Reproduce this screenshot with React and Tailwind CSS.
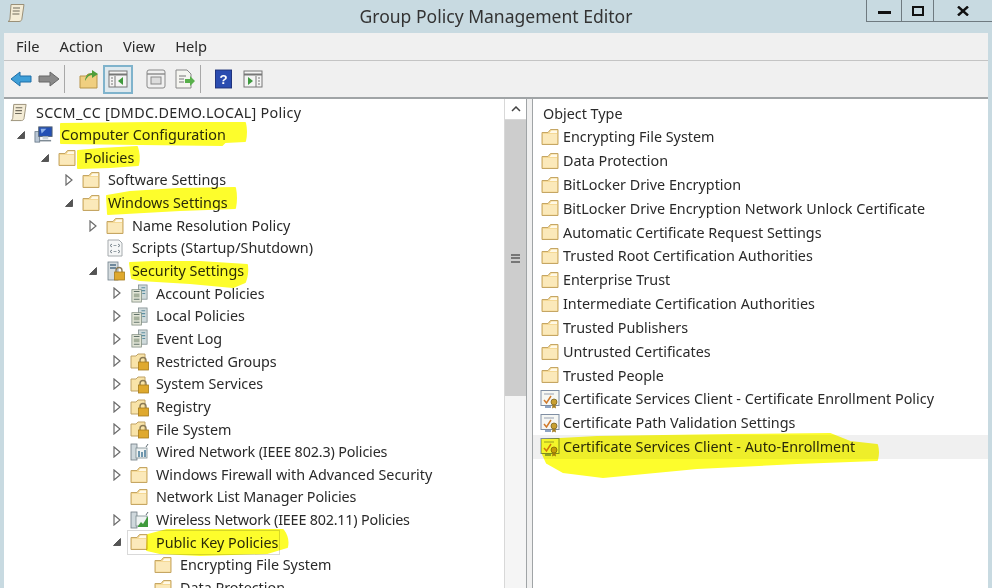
import React from 'react';

const uiFont = 'font-["Noto_Sans","Open_Sans",sans-serif]';

function Folder({ className = '' }) {
  return (
    <svg viewBox="0 0 18 18" className={`w-[18px] h-[18px] shrink-0 ${className}`}>
      <path d="M1 4.5 L1 16.5 L17 16.5 L17 1.5 L9.5 1.5 L7 4.5 Z" fill="#f5d995" stroke="#c5a664" strokeWidth="1" />
      <path d="M2 6 L2 15.5 L16 15.5 L16 6 Z" fill="#fbe9ba" />
      <path d="M8.5 5 L10.5 2.5 L16 2.5 L16 5 Z" fill="#fff9e8" />
    </svg>
  );
}

function LockFolder() {
  return (
    <svg viewBox="0 0 20 20" className="w-5 h-5 shrink-0">
      <path d="M1 5 L1 17 L15 17 L15 3 L8 3 L6 5 Z" fill="#f8e3a8" stroke="#bfa265" strokeWidth="1" />
      <path d="M10 11 V9.5 a3 3 0 0 1 6 0 V11" fill="none" stroke="#8a7a55" strokeWidth="1.4" />
      <rect x="8.5" y="11" width="10" height="8" fill="#dfa92e" stroke="#a67c1c" strokeWidth="0.8" />
    </svg>
  );
}

function Policy() {
  return (
    <svg viewBox="0 0 20 20" className="w-[19px] h-[19px] shrink-0">
      <rect x="9" y="1" width="9" height="15" fill="#cfdadb" stroke="#7d8a8c" strokeWidth="0.8" />
      <rect x="2" y="6" width="10" height="13" fill="#e3e6d8" stroke="#7d8a7c" strokeWidth="0.8" />
      <rect x="4" y="10" width="6" height="4" fill="#a5b09c" />
      <path d="M4 8 H10 M4 16 H10" stroke="#62736a" strokeWidth="1.1" />
      <path d="M12 4 H16 M12 7 H16 M13 10 H16" stroke="#5d8fa0" strokeWidth="1.2" />
    </svg>
  );
}

function Scroll({ className = 'w-[19px] h-[19px]' }) {
  return (
    <svg viewBox="0 0 20 20" className={`shrink-0 ${className}`}>
      <path d="M5 1.5 H18 L16 15 C16 17 15 18.5 13 18.5 H2 C3.5 18 4 16.5 4 15 Z" fill="#f4ecd6" stroke="#9a9078" strokeWidth="1" />
      <path d="M7 5 H14 M6.7 8 H13.7 M6.4 11 H13.4" stroke="#6f6a5c" strokeWidth="1.2" />
    </svg>
  );
}

function Computer() {
  return (
    <svg viewBox="0 0 20 20" className="w-[19px] h-[19px] shrink-0">
      <rect x="1" y="7" width="5" height="11" fill="#b9c6d4" stroke="#5f7080" strokeWidth="0.8" />
      <rect x="5" y="2" width="14" height="10" fill="#2450b4" stroke="#52606e" strokeWidth="1" />
      <path d="M7 4 L13 4 L8 9 Z" fill="#8fb2ea" />
      <path d="M9 12 H15 V15 H9 Z" fill="#c9d2d8" />
      <path d="M6 16.5 H18" stroke="#7e8a94" strokeWidth="1.6" />
    </svg>
  );
}

function ScriptDoc() {
  return (
    <svg viewBox="0 0 18 18" className="w-[18px] h-[18px] shrink-0">
      <path d="M2 1 H13 L16 4 V17 H2 Z" fill="#f6f7f7" stroke="#a5aaad" strokeWidth="1" />
      <path d="M6 5 L4 6.5 L6 8 M12 5 L14 6.5 L12 8 M6 11 L4 12.5 L6 14 M12 11 L14 12.5 L12 14" fill="none" stroke="#6b7780" strokeWidth="0.9" />
      <path d="M7.5 6.5 H10.5 M7.5 12.5 H10.5" stroke="#8d979e" strokeWidth="0.9" />
    </svg>
  );
}

function SecurityIcon() {
  return (
    <svg viewBox="0 0 20 20" className="w-5 h-5 shrink-0">
      <rect x="2" y="1" width="10" height="18" fill="#d5dcdf" stroke="#71808a" strokeWidth="0.8" />
      <path d="M4 4 H10 M4 7 H10" stroke="#4d6d86" strokeWidth="1.3" />
      <path d="M10 11 V9.5 a3 3 0 0 1 6 0 V11" fill="none" stroke="#8a7a55" strokeWidth="1.4" />
      <rect x="8.5" y="11" width="10" height="8" fill="#dfa92e" stroke="#a67c1c" strokeWidth="0.8" />
    </svg>
  );
}

function NetworkIcon({ wireless }) {
  return (
    <svg viewBox="0 0 20 20" className="w-5 h-5 shrink-0">
      <rect x="1" y="2" width="6" height="16" fill="#cfd8dc" stroke="#6e7b82" strokeWidth="0.8" />
      <rect x="6" y="6" width="11" height="10" fill="#eef2f2" stroke="#7b8a90" strokeWidth="0.8" />
      {wireless ? (
        <path d="M8 16 L11 12 L13 14 L18 6 V17 H8 Z" fill="#3f9a3c" />
      ) : (
        <path d="M9 15 V9 M12 15 V10 M15 15 V8" stroke="#4f7f9c" strokeWidth="1.6" />
      )}
      <path d="M18 2 L16 5" stroke="#5f6b72" strokeWidth="1" />
    </svg>
  );
}

function CertIcon() {
  return (
    <svg viewBox="0 0 20 20" className="w-[20px] h-[20px] shrink-0">
      <rect x="1" y="1.5" width="18" height="15" fill="#f6f7f4" stroke="#7f8ea3" strokeWidth="1" />
      <path d="M4 5 H14" stroke="#a8b0bd" strokeWidth="1.2" />
      <path d="M4 11 L6.5 14 L11 7" fill="none" stroke="#d07a2c" strokeWidth="1.5" />
      <circle cx="14" cy="13" r="3" fill="#c9a032" stroke="#6e5a1a" strokeWidth="0.7" />
      <path d="M5 17 V19 H11 V17 Z" fill="#8ea4c4" />
      <path d="M12.5 16 L12 19.5 L14 18.5 L16 19.5 L15.5 16 Z" fill="#a57f22" />
    </svg>
  );
}

function Arrow({ open }) {
  if (open) {
    return (
      <svg viewBox="0 0 10 10" className="w-[10px] h-[10px]">
        <path d="M8.5 1.5 V8.5 H1.5 Z" fill="#555" stroke="#444" strokeWidth="0.8" />
      </svg>
    );
  }
  return (
    <svg viewBox="0 0 10 12" className="w-[10px] h-3">
      <path d="M2 1 L8 6 L2 11 Z" fill="#fff" stroke="#6b6b6b" strokeWidth="1.2" />
    </svg>
  );
}

const icons = {
  folder: <Folder />,
  lock: <LockFolder />,
  policy: <Policy />,
  scroll: <Scroll />,
  computer: <Computer />,
  script: <ScriptDoc />,
  security: <SecurityIcon />,
  wired: <NetworkIcon />,
  wireless: <NetworkIcon wireless />,
};

const indent = ['pl-[5px]', 'pl-[12px]', 'pl-[36px]', 'pl-[60px]', 'pl-[84px]', 'pl-[108px]', 'pl-[132px]'];

const tree = [
  { level: 0, icon: 'scroll', text: 'SCCM_CC [DMDC.DEMO.LOCAL] Policy', track: 'tracking-[0.3px]' },
  { level: 1, icon: 'computer', text: 'Computer Configuration', arrow: 'open' },
  { level: 2, icon: 'folder', text: 'Policies', arrow: 'open' },
  { level: 3, icon: 'folder', text: 'Software Settings', arrow: 'closed' },
  { level: 3, icon: 'folder', text: 'Windows Settings', arrow: 'open' },
  { level: 4, icon: 'folder', text: 'Name Resolution Policy', arrow: 'closed' },
  { level: 4, icon: 'script', text: 'Scripts (Startup/Shutdown)' },
  { level: 4, icon: 'security', text: 'Security Settings', arrow: 'open' },
  { level: 5, icon: 'policy', text: 'Account Policies', arrow: 'closed' },
  { level: 5, icon: 'policy', text: 'Local Policies', arrow: 'closed' },
  { level: 5, icon: 'policy', text: 'Event Log', arrow: 'closed' },
  { level: 5, icon: 'lock', text: 'Restricted Groups', arrow: 'closed' },
  { level: 5, icon: 'lock', text: 'System Services', arrow: 'closed' },
  { level: 5, icon: 'lock', text: 'Registry', arrow: 'closed' },
  { level: 5, icon: 'lock', text: 'File System', arrow: 'closed' },
  { level: 5, icon: 'wired', text: 'Wired Network (IEEE 802.3) Policies', arrow: 'closed', track: 'tracking-[-0.15px]' },
  { level: 5, icon: 'folder', text: 'Windows Firewall with Advanced Security', arrow: 'closed' },
  { level: 5, icon: 'folder', text: 'Network List Manager Policies', track: 'tracking-[-0.1px]' },
  { level: 5, icon: 'wireless', text: 'Wireless Network (IEEE 802.11) Policies', arrow: 'closed', track: 'tracking-[-0.2px]' },
  { level: 5, icon: 'folder', text: 'Public Key Policies', arrow: 'open', selected: true },
  { level: 6, icon: 'folder', text: 'Encrypting File System' },
  { level: 6, icon: 'folder', text: 'Data Protection' },
];

const objects = [
  'Encrypting File System',
  'Data Protection',
  'BitLocker Drive Encryption',
  'BitLocker Drive Encryption Network Unlock Certificate',
  'Automatic Certificate Request Settings',
  'Trusted Root Certification Authorities',
  'Enterprise Trust',
  'Intermediate Certification Authorities',
  'Trusted Publishers',
  'Untrusted Certificates',
  'Trusted People',
];

// highlighter strokes traced from the picture
const marks = [
  'M61 124 L150 123 L245 123 Q247 132 245 141 L225 142 L222 145 L61 143 Z',
  'M78 151 L100 149 L137 147 Q140 156 138 165 L110 167 L78 168 Z',
  'M107 196 L130 192 L178 189 L235 188 Q237 198 235 208 L180 210 L108 214 Z',
  'M130 263 L153 262 L200 262 L247 265 Q248 274 245 282 L233 287 L190 283 L140 280 L132 278 Z',
  'M148 535 L167 530 L283 530 Q289 538 287 547 L267 553 L200 555 L160 553 L147 550 Z',
  'M542 440 L597 437 L730 435 L830 434 L850 442 L877 445 Q879 452 877 460 L797 463 L697 468 L603 477 L563 472 L547 463 L542 452 Z',
];

function TreeRow({ row }) {
  const iconBox = row.level > 1 ? 'w-[26px]' : 'w-[27px]';
  return (
    <div className={`flex items-center h-[22.65px] shrink-0 whitespace-nowrap ${indent[row.level]}`}>
      {row.level > 0 && (
        <span className="w-[18px] flex justify-start items-center shrink-0">
          {row.arrow && <Arrow open={row.arrow === 'open'} />}
        </span>
      )}
      <span className={`${iconBox} flex items-center shrink-0`}>{icons[row.icon]}</span>
      <span className={`relative ${row.track || ''}`}>
        {row.selected && <span className="absolute left-[-29px] right-[-2px] top-[-2px] bottom-[-2px] border border-[#d9d9d9]" />}
        <span className="relative">{row.text}</span>
      </span>
    </div>
  );
}

function ToolbarIcons() {
  return (
    <div className="flex items-center h-[36px] pl-[6px] shrink-0">
      <svg viewBox="0 0 22 18" className="w-[22px] h-[18px]">
        <path d="M1 9 L10 2 V6 H21 V12 H10 V16 Z" fill="#3f9fd8" stroke="#1f6fa8" strokeWidth="1" />
      </svg>
      <svg viewBox="0 0 22 18" className="w-[22px] h-[18px] ml-[6px]">
        <path d="M21 9 L12 2 V6 H1 V12 H12 V16 Z" fill="#8a8a8a" stroke="#666" strokeWidth="1" />
      </svg>
      <span className="w-px h-[28px] bg-[#a8a8a8] ml-[4px]" />
      <svg viewBox="0 0 20 20" className="w-5 h-5 ml-[14px]">
        <path d="M1 7 V19 H18 V5 H9 L7 7 Z" fill="#f0cf80" stroke="#b89548" />
        <path d="M6 12 C6 7 10 4 13 4 V1 L19 5 L13 9 V6 C10 6 8 8 6 12 Z" fill="#4f9e3a" />
      </svg>
      <span className="w-[30px] h-[29px] ml-[4px] border-2 border-[#7fb3cc] bg-[#dfe9ee] flex items-center justify-center">
        <svg viewBox="0 0 20 18" className="w-[20px] h-[18px]">
          <rect x="1" y="1" width="18" height="16" fill="#f4f4f4" stroke="#777" />
          <path d="M1 4.5 H19" stroke="#777" strokeWidth="2" />
          <path d="M7 6 V17" stroke="#777" />
          <path d="M3 8 H5 M3 11 H5 M3 14 H5" stroke="#777" />
          <path d="M15 7 V15 L10 11 Z" fill="#3e9a3e" />
        </svg>
      </span>
      <svg viewBox="0 0 20 20" className="w-5 h-5 ml-[13px]">
        <rect x="1" y="1" width="18" height="18" rx="2" fill="#f0f0f0" stroke="#888" />
        <path d="M1 5 H19" stroke="#888" strokeWidth="1.4" />
        <rect x="5" y="8" width="10" height="7" fill="#dcdcdc" stroke="#888" />
      </svg>
      <svg viewBox="0 0 22 20" className="w-[22px] h-5 ml-[8px]">
        <path d="M2 1 H13 L17 5 V19 H2 Z" fill="#f5f5f0" stroke="#888" />
        <path d="M5 7 H12 M5 10 H10 M5 13 H10" stroke="#777" />
        <path d="M11 10 H16 V7 L21 12 L16 17 V14 H11 Z" fill="#58b04a" />
      </svg>
      <span className="w-px h-[28px] bg-[#a8a8a8] ml-[4px]" />
      <svg viewBox="0 0 18 20" className="w-[17px] h-5 ml-[14px]">
        <rect x="0.5" y="0.5" width="17" height="19" fill="#2b4cb0" stroke="#1c2f78" />
        <text x="9" y="15" textAnchor="middle" fill="#fff" fontSize="14" fontWeight="700" fontFamily="Liberation Sans">?</text>
      </svg>
      <svg viewBox="0 0 20 18" className="w-[20px] h-[18px] ml-[11px]">
        <rect x="1" y="1" width="18" height="16" fill="#f4f4f4" stroke="#777" />
        <path d="M1 4.5 H19" stroke="#777" strokeWidth="2" />
        <path d="M13 6 V17" stroke="#777" />
        <path d="M15 8 H17 M15 11 H17 M15 14 H17" stroke="#777" />
        <path d="M5 7 V15 L10 11 Z" fill="#3e9a3e" />
      </svg>
    </div>
  );
}

export default function App() {
  return (
    <div className={`relative w-[992px] h-[588px] overflow-hidden flex flex-col bg-[#c8dae1] text-[#2a2a2a] text-[14.35px] ${uiFont}`}>
      {/* Title bar */}
      <div className="relative h-[33px] shrink-0 flex items-center justify-center text-[17.55px] text-[#333]">
        <span className="absolute left-[6px] top-[3px]">
          <Scroll className="w-[20px] h-[20px]" />
        </span>
        Group Policy Management Editor
        <div className="absolute right-0 top-0 h-[22px] flex border-l border-b border-[#6f7a80]">
          <span className="w-[35px] border-r border-[#6f7a80] flex items-center justify-center">
            <span className="w-[13px] h-[3px] bg-[#111] mt-[3px]" />
          </span>
          <span className="w-[32px] border-r border-[#6f7a80] flex items-center justify-center">
            <span className="w-[12px] h-[10px] border-2 border-[#111]" />
          </span>
          <span className="w-[58px] flex items-center justify-center">
            <svg viewBox="0 0 12 10" className="w-[12px] h-[10px]">
              <path d="M1 0.5 L11 9.5 M11 0.5 L1 9.5" stroke="#111" strokeWidth="2.4" />
            </svg>
          </span>
        </div>
      </div>

      {/* Window body */}
      <div className="flex-1 min-h-0 mx-[4px] flex flex-col bg-[#f0f0f0]">
        <div className="h-[28px] shrink-0 flex items-center gap-[20px] pl-[12px] border-b border-[#c4c4c4] text-[14.7px]">
          <span>File</span>
          <span>Action</span>
          <span>View</span>
          <span>Help</span>
        </div>
        <ToolbarIcons />

        <div className="flex-1 min-h-0 flex gap-[5px] border-t-2 border-[#a0a4a6]">
          {/* Tree */}
          <div className="w-[523px] shrink-0 flex bg-white border-r border-[#a0a4a6]">
            <div className="flex-1 min-w-0 pt-[2px] overflow-hidden">
              {tree.map((row) => (
                <TreeRow key={row.text + row.level} row={row} />
              ))}
            </div>
            <div className="w-[22px] shrink-0 flex flex-col bg-[#f5f5f5] border-l border-[#d8d8d8]">
              <div className="h-[21px] flex items-center justify-center bg-white border-b border-[#d8d8d8]">
                <svg viewBox="0 0 10 6" className="w-[10px] h-[6px]">
                  <path d="M1 5 L5 1 L9 5" fill="none" stroke="#444" strokeWidth="1.5" />
                </svg>
              </div>
              <div className="h-[276px] bg-[#cdcdcd] flex items-center justify-center">
                <span className="w-[9px] h-[9px] border-y-2 border-[#777] flex items-center">
                  <span className="w-full h-[1.5px] bg-[#777]" />
                </span>
              </div>
            </div>
          </div>

          {/* Results */}
          <div className="flex-1 min-w-0 bg-white border-l border-[#a0a4a6]">
            <div className="h-[23px] mt-[3px] pl-[10px] flex items-center">Object Type</div>
            <div className="flex flex-col">
              {objects.map((name) => (
                <div key={name} className="h-[23.85px] flex items-center pl-[8px] whitespace-nowrap">
                  <span className="w-[22px] shrink-0 flex items-center"><Folder /></span>
                  {name}
                </div>
              ))}
              <div className="h-[23.85px] flex items-center pl-[7px] whitespace-nowrap">
                <span className="w-[23px] shrink-0 flex items-center"><CertIcon /></span>
                Certificate Services Client - Certificate Enrollment Policy
              </div>
              <div className="h-[23.85px] flex items-center pl-[7px] whitespace-nowrap">
                <span className="w-[23px] shrink-0 flex items-center"><CertIcon /></span>
                Certificate Path Validation Settings
              </div>
              <div className="h-[23.85px] flex items-center pl-[7px] whitespace-nowrap bg-[#f0f0f0]">
                <span className="w-[23px] shrink-0 flex items-center"><CertIcon /></span>
                Certificate Services Client - Auto-Enrollment
              </div>
            </div>
          </div>
        </div>
      </div>

      {/* Highlighter marks over the screenshot */}
      <svg viewBox="0 0 992 588" className="absolute inset-0 w-[992px] h-[588px] mix-blend-multiply pointer-events-none">
        {marks.map((d) => (
          <path key={d} d={d} fill="#fdfd2c" stroke="#fdfd2c" strokeWidth="2" strokeLinejoin="round" />
        ))}
      </svg>
    </div>
  );
}
